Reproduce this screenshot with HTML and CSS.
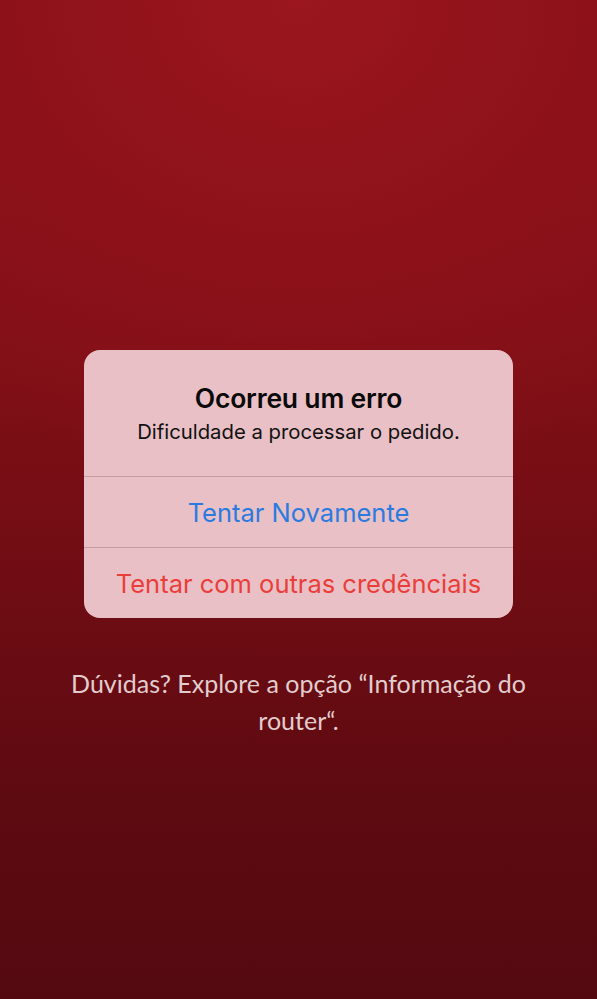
FILE: index.html
```html
<!DOCTYPE html>
<html lang="pt">

<head>
    <meta charset="UTF-8">
    <meta name="viewport" content="width=device-width, initial-scale=1.0">
    <title>Erro</title>
    <link rel="stylesheet" href="styles.css">
</head>

<body>
    <main class="screen">
        <div class="alert">
            <div class="alert-body">
                <h2 class="alert-title">Ocorreu um erro</h2>
                <p class="alert-message">Dificuldade a processar o pedido.</p>
            </div>
            <button class="alert-button primary">Tentar Novamente</button>
            <button class="alert-button destructive">Tentar com outras credênciais</button>
        </div>
        <p class="help">Dúvidas? Explore a opção “Informação do router“.</p>
    </main>
</body>

</html>
```

FILE: styles.css
```css
* {
    margin: 0;
    padding: 0;
    box-sizing: border-box;
}

html,
body {
    height: 100%;
}

body {
    background: radial-gradient(ellipse 120% 60% at 50% 0%, #9b161e 0%, #8c1119 45%, rgba(140, 17, 25, 0) 80%),
        linear-gradient(to bottom, #94141c 0%, #7a0e15 45%, #5e0a11 80%, #540910 100%);
    font-family: Inter, "Noto Sans", sans-serif;
}

.screen {
    display: flex;
    flex-direction: column;
    align-items: center;
    padding-top: 350px;
}

.alert {
    width: 429px;
    background-color: #e8c0c5;
    border-radius: 16px;
    display: flex;
    flex-direction: column;
    overflow: hidden;
}

.alert-body {
    height: 127px;
    padding-top: 33px;
    text-align: center;
    border-bottom: 1px solid #c99ba2;
}

.alert-title {
    font-size: 26.5px;
    font-weight: 600;
    color: #0a0a0a;
    line-height: 30px;
    letter-spacing: -0.2px;
}

.alert-message {
    font-size: 20.3px;
    color: #111;
    line-height: 24px;
    margin-top: 7px;
}

.alert-button {
    height: 71px;
    border: none;
    background: transparent;
    font-family: Inter, "Noto Sans", sans-serif;
    font-size: 25.5px;
}

.alert-button.primary {
    color: #2a7be0;
    border-bottom: 1px solid #c99ba2;
}

.alert-button.destructive {
    color: #ea3e3b;
    height: 70px;
}

.help {
    width: 480px;
    margin-top: 47px;
    text-align: center;
    font-family: Lato, "Open Sans", sans-serif;
    font-size: 25px;
    line-height: 37px;
    color: #e2cdce;
}
```
